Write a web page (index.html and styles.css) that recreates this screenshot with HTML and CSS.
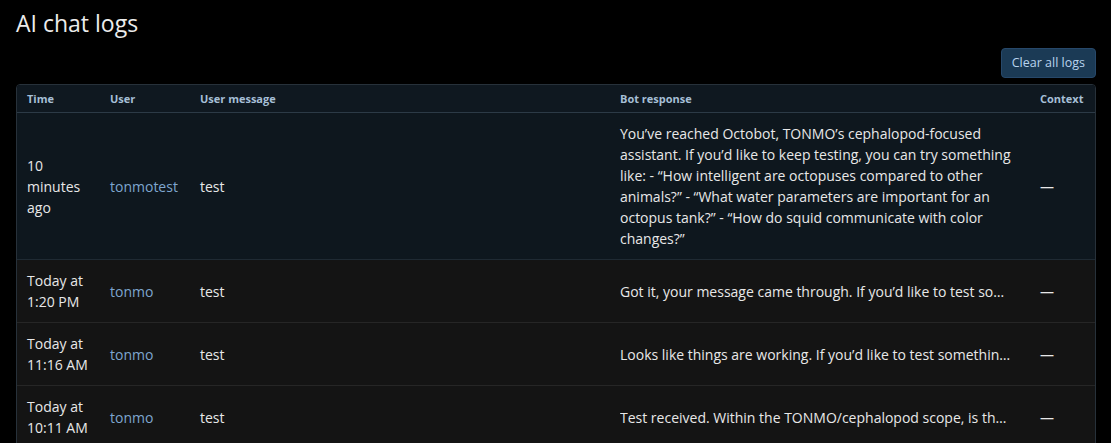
FILE: index.html
```html
<!DOCTYPE html>
<html lang="en">
<head>
<meta charset="utf-8">
<title>AI chat logs</title>
<link rel="stylesheet" href="styles.css">
</head>
<body>
<main class="page">
  <h1 class="title">AI chat logs</h1>
  <div class="toolbar">
    <button class="btn-clear" type="button">Clear all logs</button>
  </div>
  <div class="table-wrap">
    <table class="logs">
      <colgroup>
        <col class="c-time">
        <col class="c-user">
        <col class="c-msg">
        <col class="c-bot">
        <col class="c-ctx">
      </colgroup>
      <thead>
        <tr>
          <th>Time</th>
          <th>User</th>
          <th>User message</th>
          <th>Bot response</th>
          <th>Context</th>
        </tr>
      </thead>
      <tbody>
        <tr class="row-active">
          <td>10 minutes ago</td>
          <td><a class="user" href="#">tonmotest</a></td>
          <td>test</td>
          <td>You’ve reached Octobot, TONMO’s cephalopod-focused assistant. If you’d like to keep testing, you can try something like: - “How intelligent are octopuses compared to other animals?” - “What water parameters are important for an octopus tank?” - “How do squid communicate with color changes?”</td>
          <td>—</td>
        </tr>
        <tr>
          <td>Today at 1:20 PM</td>
          <td><a class="user" href="#">tonmo</a></td>
          <td>test</td>
          <td><div class="bot-clip">Got it, your message came through. If you’d like to test so…</div></td>
          <td>—</td>
        </tr>
        <tr>
          <td>Today at 11:16 AM</td>
          <td><a class="user" href="#">tonmo</a></td>
          <td>test</td>
          <td><div class="bot-clip">Looks like things are working. If you’d like to test somethin…</div></td>
          <td>—</td>
        </tr>
        <tr>
          <td>Today at 10:11 AM</td>
          <td><a class="user" href="#">tonmo</a></td>
          <td>test</td>
          <td><div class="bot-clip">Test received. Within the TONMO/cephalopod scope, is th…</div></td>
          <td>—</td>
        </tr>
      </tbody>
    </table>
  </div>
</main>
</body>
</html>
```

FILE: styles.css
```css
html, body {
  margin: 0;
  padding: 0;
  background: #000;
}

body {
  font-family: "Open Sans", "Noto Sans", sans-serif;
  color: #e8e8e8;
}

.page {
  padding: 0 15px 0 16px;
}

.title {
  margin: 0;
  padding-top: 7px;
  font-size: 23px;
  line-height: 32px;
  font-weight: 400;
  color: #ececec;
}

.toolbar {
  display: flex;
  justify-content: flex-end;
  margin-top: 9px;
}

.btn-clear {
  font-family: inherit;
  font-size: 12.5px;
  line-height: 18px;
  padding: 5px 10px;
  background: #1b3a55;
  color: #b8d3ee;
  border: 1px solid #27486a;
  border-radius: 4px;
  cursor: pointer;
}

.table-wrap {
  margin-top: 6px;
  border: 1px solid #27313a;
  border-radius: 4px;
  overflow: hidden;
}

.logs {
  width: 100%;
  border-collapse: collapse;
  table-layout: fixed;
  font-size: 14px;
  line-height: 21px;
}

.c-time { width: 83px; }
.c-user { width: 90px; }
.c-msg { width: 420px; }
.c-bot { width: 420px; }
.c-ctx { width: auto; }

.logs th {
  background: #0f1820;
  color: #a6bfd6;
  font-size: 11px;
  font-weight: 700;
  text-align: left;
  padding: 5px 10px;
  line-height: 17px;
  border-bottom: 1px solid #2c3a46;
}

.logs td {
  padding: 10px;
  vertical-align: middle;
  background: #141414;
  border-bottom: 1px solid #262626;
  color: #e8e8e8;
}

.logs tr.row-active td {
  background: #0e171e;
  border-bottom-color: #1f2a33;
}

.user {
  color: #7ea6cf;
  text-decoration: none;
}

.bot-clip {
  white-space: nowrap;
  overflow: hidden;
  text-overflow: ellipsis;
}
```
